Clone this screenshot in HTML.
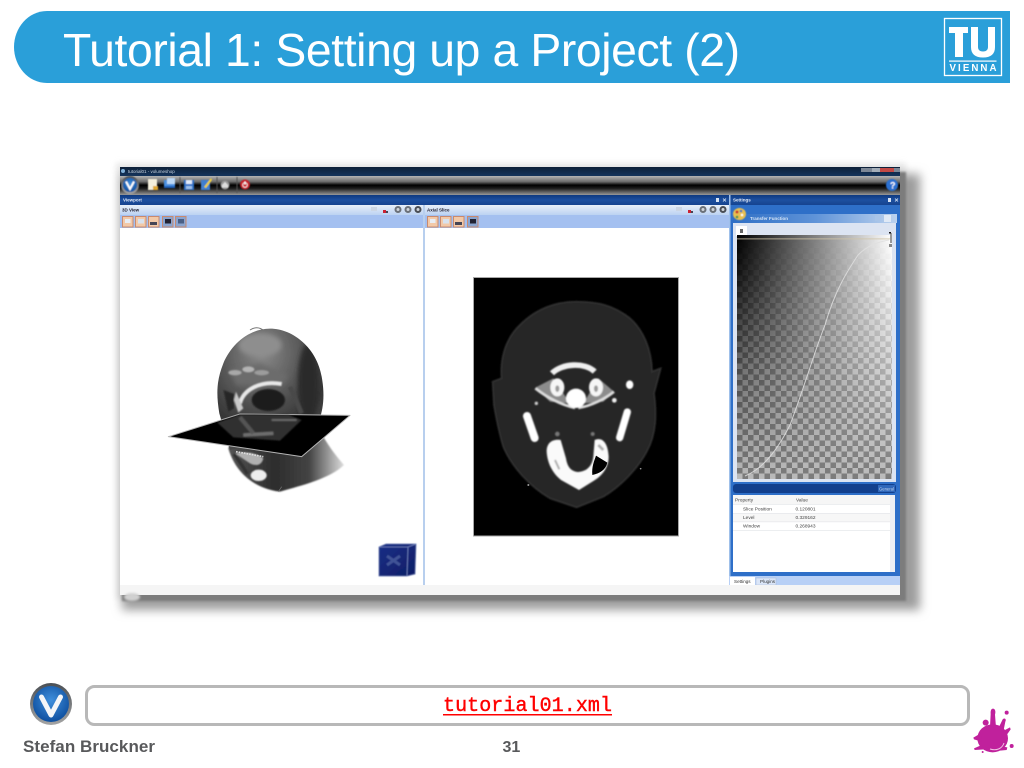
<!DOCTYPE html>
<html><head><meta charset="utf-8"><title>Tutorial 1: Setting up a Project (2)</title>
<style>html,body{margin:0;padding:0;background:#fff;width:1024px;height:768px;overflow:hidden}svg{display:block}</style>
</head><body>
<svg xmlns="http://www.w3.org/2000/svg" width="1024" height="768" viewBox="0 0 1024 768">
<defs>
<filter id="b7" x="-10%" y="-10%" width="120%" height="120%"><feGaussianBlur stdDeviation="5"/></filter>
<filter id="b3" x="-10%" y="-10%" width="120%" height="120%"><feGaussianBlur stdDeviation="3"/></filter>
<filter id="b1" x="-20%" y="-20%" width="140%" height="140%"><feGaussianBlur stdDeviation="1"/></filter>
<filter id="s" x="-20%" y="-50%" width="140%" height="200%"><feGaussianBlur stdDeviation="0.35"/></filter>
<filter id="s2" x="-30%" y="-30%" width="160%" height="160%"><feGaussianBlur stdDeviation="0.5"/></filter>
<filter id="z6" x="-30%" y="-30%" width="160%" height="160%"><feGaussianBlur stdDeviation="7"/></filter>
<filter id="z3" x="-30%" y="-30%" width="160%" height="160%"><feGaussianBlur stdDeviation="2.5"/></filter>
<linearGradient id="tb" x1="0" y1="0" x2="0" y2="1"><stop offset="0" stop-color="#b4b4b4"/><stop offset=".3" stop-color="#6c6c6c"/><stop offset=".48" stop-color="#000"/><stop offset=".65" stop-color="#1c1c1c"/><stop offset="1" stop-color="#9a9a9a"/></linearGradient>
<linearGradient id="ttl" x1="0" y1="0" x2="0" y2="1"><stop offset="0" stop-color="#0d2038"/><stop offset="1" stop-color="#14345c"/></linearGradient>
<linearGradient id="ph" x1="0" y1="0" x2="0" y2="1"><stop offset="0" stop-color="#0f3a80"/><stop offset=".5" stop-color="#1d4f9f"/><stop offset="1" stop-color="#16438f"/></linearGradient>
<linearGradient id="vh" x1="0" y1="0" x2="0" y2="1"><stop offset="0" stop-color="#e8eff9"/><stop offset="1" stop-color="#bcd2f2"/></linearGradient>
<linearGradient id="tf" x1="0" y1="0" x2="1" y2="0"><stop offset="0" stop-color="#2f6fc5"/><stop offset=".5" stop-color="#5f93d8"/><stop offset="1" stop-color="#bcd2ee"/></linearGradient>
<linearGradient id="hg" x1="0" y1="0" x2="1" y2="0"><stop offset="0" stop-color="#000"/><stop offset="1" stop-color="#fff"/></linearGradient>
<linearGradient id="fade" x1="0" y1="0" x2="0" y2="1"><stop offset="0" stop-color="#fff"/><stop offset=".15" stop-color="#ddd"/><stop offset=".55" stop-color="#666"/><stop offset="1" stop-color="#000"/></linearGradient>
<mask id="fm"><rect x="737" y="237" width="155" height="242" fill="url(#fade)"/></mask>
<pattern id="chk" x="737" y="237" width="11" height="11" patternUnits="userSpaceOnUse"><rect width="11" height="11" fill="#bbb"/><rect width="5.5" height="5.5" fill="#7c7c7c"/><rect x="5.5" y="5.5" width="5.5" height="5.5" fill="#7c7c7c"/></pattern>
<radialGradient id="blue" cx=".5" cy=".4" r=".6"><stop offset="0" stop-color="#3f8fdc"/><stop offset="1" stop-color="#0e4f9f"/></radialGradient>
<linearGradient id="ring" x1="0" y1="0" x2="0" y2="1"><stop offset="0" stop-color="#4a4f54"/><stop offset="1" stop-color="#a5a5a5"/></linearGradient>
<radialGradient id="skull" cx=".42" cy=".2" r=".85"><stop offset="0" stop-color="#8a8a8a"/><stop offset=".4" stop-color="#5c5c5c"/><stop offset=".75" stop-color="#363636"/><stop offset="1" stop-color="#4a4a4a"/></radialGradient>
<linearGradient id="neck" x1="0" y1="0" x2="1" y2="0"><stop offset="0" stop-color="#555"/><stop offset=".4" stop-color="#2c2c2c"/><stop offset=".7" stop-color="#444"/><stop offset="1" stop-color="#ddd"/></linearGradient>
<linearGradient id="cube" x1="0" y1="0" x2="1" y2="1"><stop offset="0" stop-color="#1a2f86"/><stop offset="1" stop-color="#0e1d66"/></linearGradient>
<clipPath id="hc"><path d="M330 26C400 26 470 85 485 170C495 225 490 265 478 300L420 350L300 370L210 390L195 340L178 280C168 220 170 180 190 130C215 70 270 26 330 26Z"/></clipPath>
</defs>

<!-- title bar -->
<path d="M47 11H1010V83H47C28 83 14 66 14 47C14 28 28 11 47 11Z" fill="#2a9fd9"/>
<text x="63" y="66" font-family="'Liberation Sans',sans-serif" font-size="46.300" fill="#fff" textLength="677" lengthAdjust="spacing">Tutorial 1: Setting up a Project (2)</text>

<!-- TU logo -->
<rect x="944.5" y="18.5" width="57" height="57" fill="none" stroke="#fff" stroke-width="1.3"/>
<path d="M949 27H968V33H963V57H955V33H949Z" fill="#fff"/>
<path d="M971 27H978V47C978 50 980 51.500 983 51.500C986 51.500 988 50 988 47V27H995V47C995 54 991 57.500 983 57.500C975 57.500 971 54 971 47Z" fill="#fff"/>
<rect x="949" y="60.500" width="47.500" height="1.200" fill="#fff"/>
<text x="949.500" y="71" font-family="'Liberation Sans',sans-serif" font-size="9.700" font-weight="700" fill="#fff" textLength="47" lengthAdjust="spacing">VIENNA</text>

<!-- drop shadow -->
<rect x="116" y="163" width="790" height="436" fill="#e8e8e8" filter="url(#b3)"/>
<rect x="122" y="174" width="798" height="436" fill="#9c9c9c" filter="url(#b7)"/>
<rect x="122" y="172" width="784" height="429" fill="#7c7c7c" filter="url(#b1)"/>
<rect x="120" y="167" width="780" height="428" fill="#f4f4f4"/>

<!-- window title + toolbar -->
<rect x="120" y="167" width="780" height="9" fill="url(#ttl)"/>
<circle cx="123" cy="171" r="2" fill="#7fb0d8"/>
<text x="128" y="173" font-family="'Liberation Sans',sans-serif" font-size="4.500" fill="#c8d4e2" filter="url(#s)">tutorial01 - volumeshop</text>
<g filter="url(#s)">
<rect x="861" y="168" width="11" height="4" fill="#7b8796"/><rect x="872" y="168" width="8" height="4" fill="#a3adb8"/><rect x="880" y="168" width="14" height="4" fill="#c24a44"/><rect x="894" y="168" width="6" height="4" fill="#7b8796"/>
</g>
<rect x="120" y="176" width="780" height="19" fill="url(#tb)"/>
<g filter="url(#s2)">
<circle cx="130" cy="185" r="9" fill="url(#ring)"/><circle cx="130" cy="185" r="7" fill="url(#blue)"/><path d="M126 181.500L130 189L134 181.500" fill="none" stroke="#fff" stroke-width="2"/>
<rect x="148" y="179" width="9" height="11" fill="#f4efdc"/><rect x="153" y="186" width="5" height="4" fill="#e0a830"/>
<rect x="164" y="180" width="11" height="7" fill="#4a90e0"/><rect x="167" y="178" width="8" height="6" fill="#bcd8f6"/><rect x="164" y="186" width="11" height="2" fill="#1f5fb8"/>
<rect x="179.500" y="177" width="1" height="16" fill="#555"/>
<rect x="184" y="180" width="10" height="10" fill="#2e72c8"/><rect x="186" y="180" width="6" height="4" fill="#dfeafa"/><rect x="186" y="186" width="6" height="3" fill="#9dbfe8"/>
<rect x="201" y="180" width="9" height="10" fill="#3f7fd0"/><path d="M204 187L211 178L212 180L206 188Z" fill="#f0d040"/>
<rect x="216.500" y="177" width="1" height="16" fill="#555"/>
<circle cx="225" cy="185" r="4.500" fill="#9a9a9a"/><path d="M222 185L225 182L228 185V187.500H222Z" fill="#ddd"/>
<rect x="236.500" y="177" width="1" height="16" fill="#555"/>
<circle cx="245" cy="184.500" r="5" fill="#c8202a"/><path d="M245 181.500V184.500" stroke="#fff" stroke-width="1.200"/><circle cx="245" cy="185" r="2.300" fill="none" stroke="#fff" stroke-width=".8"/>
<circle cx="892" cy="185" r="6" fill="#2a6fd0"/><text x="890" y="188.500" font-family="'Liberation Sans',sans-serif" font-size="9" font-weight="700" fill="#fff">?</text>
</g>

<!-- panel headers -->
<rect x="120" y="195" width="610" height="10" fill="url(#ph)"/>
<text x="123" y="201.500" font-family="'Liberation Sans',sans-serif" font-size="4.500" font-weight="700" fill="#e0e8f6" filter="url(#s)">Viewport</text>
<rect x="729" y="195" width="171" height="10" fill="url(#ph)"/>
<rect x="729" y="195" width="1.500" height="10" fill="#9fc0ea"/>
<text x="733" y="201.500" font-family="'Liberation Sans',sans-serif" font-size="4.500" font-weight="700" fill="#e0e8f6" filter="url(#s)">Settings</text>
<g fill="#d8e4f4" filter="url(#s)">
<rect x="716" y="198" width="3" height="4"/><path d="M723 198.500L726 201.500M726 198.500L723 201.500" stroke="#d8e4f4" stroke-width=".8"/>
<rect x="888" y="198" width="3" height="4"/><path d="M895 198.500L898 201.500M898 198.500L895 201.500" stroke="#d8e4f4" stroke-width=".8"/>
</g>

<!-- view sub headers -->
<rect x="120" y="205" width="304" height="10" fill="url(#vh)"/>
<rect x="425" y="205" width="304" height="10" fill="url(#vh)"/>
<rect x="120" y="215" width="304" height="13" fill="#a4c0f0"/>
<rect x="425" y="215" width="304" height="13" fill="#a4c0f0"/>
<rect x="120" y="228" width="304" height="357" fill="#fff"/>
<rect x="425" y="228" width="304" height="357" fill="#fff"/>
<rect x="423" y="205" width="2" height="380" fill="#b8cfee"/>
<text x="122" y="211.500" font-family="'Liberation Sans',sans-serif" font-size="4.500" font-weight="700" fill="#223" filter="url(#s)">3D View</text>
<text x="427" y="211.500" font-family="'Liberation Sans',sans-serif" font-size="4.500" font-weight="700" fill="#223" filter="url(#s)">Axial Slice</text>

<g filter="url(#s)">
<g>
<rect x="371" y="207" width="6" height="4" fill="#ccd6e4"/><rect x="383" y="210" width="3" height="3" fill="#cc2230"/><rect x="386" y="211" width="2" height="2" fill="#445"/>
<circle cx="398" cy="209.500" r="3.500" fill="#6b7078"/><circle cx="398" cy="209.500" r="1.500" fill="#cfd4da"/>
<circle cx="408" cy="209.500" r="3.500" fill="#6b7078"/><circle cx="408" cy="209.500" r="1.500" fill="#cfd4da"/>
<circle cx="418" cy="209.500" r="3.500" fill="#4a4e55"/><circle cx="418" cy="209.500" r="1.500" fill="#cfd4da"/>
</g>
<g transform="translate(305 0)">
<rect x="371" y="207" width="6" height="4" fill="#ccd6e4"/><rect x="383" y="210" width="3" height="3" fill="#cc2230"/><rect x="386" y="211" width="2" height="2" fill="#445"/>
<circle cx="398" cy="209.500" r="3.500" fill="#6b7078"/><circle cx="398" cy="209.500" r="1.500" fill="#cfd4da"/>
<circle cx="408" cy="209.500" r="3.500" fill="#6b7078"/><circle cx="408" cy="209.500" r="1.500" fill="#cfd4da"/>
<circle cx="418" cy="209.500" r="3.500" fill="#4a4e55"/><circle cx="418" cy="209.500" r="1.500" fill="#cfd4da"/>
</g>
<g stroke="#c98a6e" stroke-width="1">
<rect x="122.500" y="216.500" width="10.500" height="10.500" fill="#f2c9a8"/><rect x="135.500" y="216.500" width="10.500" height="10.500" fill="#f2c9a8"/><rect x="148.500" y="216.500" width="10.500" height="10.500" fill="#f2c9a8"/>
<rect x="162.500" y="216.500" width="10.500" height="10.500" fill="#8aa4cf"/><rect x="175.500" y="216.500" width="10.500" height="10.500" fill="#8aa4cf"/>
<rect x="427.500" y="216.500" width="10.500" height="10.500" fill="#f2c9a8"/><rect x="440.500" y="216.500" width="10.500" height="10.500" fill="#f2c9a8"/><rect x="453.500" y="216.500" width="10.500" height="10.500" fill="#f2c9a8"/>
<rect x="467.500" y="216.500" width="10.500" height="10.500" fill="#8aa4cf"/>
</g>
<rect x="125" y="219" width="5.500" height="4" fill="#e8edf4"/><rect x="138" y="219" width="6" height="4.500" fill="#d8e2ee"/><rect x="150" y="222" width="7" height="3" fill="#445"/>
<rect x="165" y="219" width="6" height="4.500" fill="#223"/><rect x="178" y="219" width="6" height="4.500" fill="#4a5f86"/>
<rect x="430" y="219" width="5.500" height="4" fill="#e8edf4"/><rect x="443" y="219" width="6" height="4.500" fill="#d8e2ee"/><rect x="455" y="222" width="7" height="3" fill="#445"/><rect x="470" y="219" width="6" height="4.500" fill="#223"/>
</g>

<!-- 3D skull -->
<g transform="translate(160 320) scale(.33333)">
<path d="M270 30C285 20 300 22 312 32" fill="none" stroke="#777" stroke-width="3"/>
<path d="M205 385C225 455 280 505 360 515C430 495 510 475 552 435C530 410 510 385 490 350L420 330L220 340Z" fill="url(#neck)" filter="url(#z3)"/>
<path d="M330 26C400 26 470 85 485 170C495 225 490 265 478 300L420 350L300 370L210 390L195 340L178 280C168 220 170 180 190 130C215 70 270 26 330 26Z" fill="url(#skull)" filter="url(#s2)"/>
<g clip-path="url(#hc)">
<g filter="url(#z6)">
<ellipse cx="300" cy="75" rx="65" ry="35" fill="#8e8e8e"/>
<ellipse cx="445" cy="190" rx="32" ry="120" fill="#2c2c2c"/>
<path d="M210 150L300 130L385 165L370 190L230 195Z" fill="#6c6c6c"/>
</g>
<g filter="url(#z3)">
<ellipse cx="225" cy="158" rx="20" ry="8" fill="#a8a8a8"/><ellipse cx="265" cy="148" rx="18" ry="9" fill="#b4b4b4"/><ellipse cx="305" cy="158" rx="22" ry="8" fill="#9c9c9c"/>
<path d="M240 250C250 210 300 180 365 192" fill="none" stroke="#e8e8e8" stroke-width="12"/>
<path d="M390 200L425 280" stroke="#4a4a4a" stroke-width="14"/>
<path d="M190 210L222 222L222 265L205 275Z" fill="#262626"/>
<path d="M228 215L250 265L235 278L222 240Z" fill="#c8c8c8"/>
</g>
<ellipse cx="325" cy="240" rx="50" ry="33" fill="#1b1b1b" filter="url(#z3)"/>
</g>
<polygon points="25,350 240,282 570,286 425,410" fill="#000" stroke="#b5b5b5" stroke-width="3" stroke-linejoin="round"/>
<g filter="url(#z3)" opacity=".8">
<path d="M172 308L240 284L385 284L425 300L360 362L220 352Z" fill="#3c3c3c"/>
<path d="M250 345L340 340" stroke="#8a8a8a" stroke-width="10"/>
<path d="M240 292L280 340" stroke="#6a6a6a" stroke-width="12"/>
<path d="M335 300L410 300" stroke="#888" stroke-width="5"/>
</g>
<g filter="url(#z3)">
<path d="M225 400C250 395 285 395 310 415C305 435 290 440 270 430Z" fill="#b0b0b0"/>
<ellipse cx="296" cy="466" rx="24" ry="17" fill="#eee"/>
<path d="M262 462C250 440 235 420 222 402" stroke="#333" stroke-width="10" fill="none"/>
</g>
<path d="M228 395L310 410" stroke="#ddd" stroke-width="5" stroke-dasharray="5 3" filter="url(#s2)"/>
<path d="M355 515L365 500" stroke="#777" stroke-width="2"/>
</g>

<!-- axis cube -->
<g filter="url(#s2)">
<path d="M379 547L386 544L416 544L415 574L407 576L379 576Z" fill="url(#cube)" stroke="#5a6ca8" stroke-width=".8"/>
<path d="M379 547L408 547L416 544M408 547L407 576" fill="none" stroke="#7587c0" stroke-width=".8"/>
<path d="M387 556L400 565M400 556L387 565" stroke="#3f5296" stroke-width="3"/>
</g>

<!-- CT slice -->
<rect x="473.500" y="277.500" width="205" height="258.500" fill="#000" stroke="#a8a8a8" stroke-width="1"/>
<g transform="translate(470 270) scale(.33333)">
<path d="M320 95C380 95 430 105 480 145C520 180 545 240 546 305L572 295L552 370C560 430 560 490 530 545C500 600 450 650 400 680L320 712L240 685C180 650 125 590 100 530C85 480 78 440 72 405L68 335L95 325C90 270 105 215 140 175C190 120 250 95 320 95Z" fill="#262626" stroke="#333" stroke-width="5" filter="url(#z3)"/>
<g filter="url(#z3)">
<path d="M246 310C275 280 345 276 374 305" fill="none" stroke="#f0f0f0" stroke-width="17"/>
<path d="M196 353L250 325L300 400L240 395Z" fill="#8c8c8c"/>
<path d="M432 365L385 325L340 400L400 395Z" fill="#8c8c8c"/>
<path d="M196 355C225 378 265 402 315 414" fill="none" stroke="#ddd" stroke-width="8"/>
<path d="M432 365C405 387 365 407 325 414" fill="none" stroke="#ddd" stroke-width="8"/>
<ellipse cx="262" cy="352" rx="21" ry="27" fill="#f6f6f6"/><ellipse cx="262" cy="356" rx="6" ry="10" fill="#999"/>
<ellipse cx="378" cy="352" rx="21" ry="27" fill="#f6f6f6"/><ellipse cx="378" cy="356" rx="6" ry="10" fill="#999"/>
<ellipse cx="318" cy="385" rx="30" ry="29" fill="#fff"/>
<ellipse cx="479" cy="344" rx="11" ry="13" fill="#fff"/>
<circle cx="433" cy="391" r="7" fill="#f0f0f0"/>
<circle cx="199" cy="400" r="5" fill="#ccc"/>
<path d="M171 438L194 504" stroke="#fff" stroke-width="24" stroke-linecap="round"/>
<path d="M472 426L449 503" stroke="#fff" stroke-width="22" stroke-linecap="round"/>
<circle cx="262" cy="492" r="7" fill="#777"/><circle cx="368" cy="492" r="6" fill="#777"/>
<path d="M230 545C230 520 245 506 272 510L288 565C292 590 302 604 325 606C350 604 366 590 370 560L374 510C398 500 414 520 416 560C416 592 397 617 372 632L327 660L273 630C248 610 232 580 230 545Z" fill="#fafafa"/>
<path d="M255 570L268 598" stroke="#aaa" stroke-width="6"/>
<path d="M385 525L400 540" stroke="#aaa" stroke-width="8"/>
</g>
<path d="M378 557L412 578C407 600 390 610 367 615C365 590 372 575 378 557Z" fill="#000"/>
<circle cx="175" cy="645" r="3" fill="#999"/><circle cx="512" cy="596" r="2.500" fill="#999"/>
</g>

<!-- Settings panel -->
<rect x="729" y="205" width="171" height="371" fill="#2e6fc8"/>
<rect x="729" y="195" width="1.500" height="390" fill="#9fc0ea"/>
<rect x="733" y="214" width="164" height="9" fill="url(#tf)"/>
<text x="750" y="220" font-family="'Liberation Sans',sans-serif" font-size="4.500" font-weight="700" fill="#d8e6f6" filter="url(#s)">Transfer Function</text>
<rect x="733" y="223" width="163" height="259" fill="#dce4f2"/>
<rect x="736" y="226" width="11" height="10" fill="#fff"/>
<rect x="740" y="229" width="3" height="4" fill="#666"/>
<rect x="875" y="216" width="5" height="5" fill="#a8c4e8" /><rect x="884" y="215" width="7" height="7" fill="#dfe9f6"/>
<g filter="url(#s2)">
<ellipse cx="739.500" cy="214" rx="6.500" ry="6" fill="#e8c050"/><circle cx="737" cy="212" r="1.500" fill="#c83030"/><circle cx="741" cy="211" r="1.300" fill="#3a70c0"/><circle cx="737" cy="217" r="1.300" fill="#3a9050"/><circle cx="742" cy="215" r="1.200" fill="#fff"/>
</g>
<rect x="737" y="235" width="155" height="4" fill="url(#hg)"/>
<rect x="737" y="237" width="155" height="242" fill="url(#chk)" filter="url(#s)"/>
<rect x="737" y="237" width="155" height="242" fill="url(#hg)" mask="url(#fm)"/>
<rect x="737" y="238.500" width="155" height=".8" fill="#cfc4a8"/>
<path d="M745 476C765 468 780 445 790 425C805 385 815 350 825 325C835 290 848 270 858 255C868 245 878 242 889 240" fill="none" stroke="#e0e0e0" stroke-width="1" opacity=".85" filter="url(#s)"/>
<rect x="890" y="233" width="2" height="10" fill="#999"/><rect x="889" y="244" width="3" height="3" fill="#888"/><rect x="889" y="232" width="2" height="1.500" fill="#111"/>
<rect x="733" y="484" width="163" height="9" rx="3" fill="#123f8c"/>
<rect x="878" y="485" width="17" height="7" fill="#2f67ba"/>
<text x="879" y="490.500" font-family="'Liberation Sans',sans-serif" font-size="4.200" fill="#c4d6f0" filter="url(#s)">General</text>
<rect x="733" y="495" width="162" height="77" fill="#fff"/>
<rect x="733" y="495" width="158" height="9" fill="#f6f6f6"/>
<rect x="890" y="495" width="5" height="77" fill="#eef0f4"/>
<rect x="733" y="513.500" width="157" height="8" fill="#f7f7f7"/>
<g fill="#e4e6ea"><rect x="733" y="504" width="157" height=".7"/><rect x="733" y="513" width="157" height=".7"/><rect x="733" y="521.500" width="157" height=".7"/><rect x="733" y="530" width="157" height=".7"/></g>
<g font-family="'Liberation Sans',sans-serif" font-size="4.800" fill="#444" filter="url(#s)">
<text x="735" y="501.500">Property</text><text x="796" y="501.500">Value</text>
<text x="743" y="510.500">Slice Position</text><text x="795.500" y="510.500">0.120801</text>
<text x="743" y="519">Level</text><text x="795.500" y="519">0.329162</text>
<text x="743" y="527.500">Window</text><text x="795.500" y="527.500">0.268943</text>
</g>
<rect x="729" y="576" width="171" height="9" fill="#b8d0f6"/>
<rect x="730" y="577" width="25" height="8" fill="#fff"/>
<rect x="756" y="578" width="20" height="7" fill="#dbe6f8" stroke="#a8b8d4" stroke-width=".5"/>
<g font-family="'Liberation Sans',sans-serif" font-size="4.600" fill="#333" filter="url(#s)"><text x="734" y="582.800">Settings</text><text x="760" y="582.800">Plugins</text></g>
<rect x="120" y="585" width="780" height="10" fill="#f5f5f5"/>
<ellipse cx="132" cy="597" rx="8" ry="4" fill="#d0d0d0" filter="url(#b1)"/>

<!-- footer -->
<circle cx="51" cy="704" r="21" fill="url(#ring)"/>
<circle cx="51" cy="704" r="18" fill="url(#blue)"/>
<path d="M41.500 697L51 715L60.500 697" fill="none" stroke="#f4f6f8" stroke-width="5" stroke-linejoin="round" stroke-linecap="round"/>
<rect x="86.500" y="686.500" width="882" height="38" rx="8" fill="#fff" stroke="#b8b8b8" stroke-width="3"/>
<text x="443" y="711" font-family="'Liberation Mono',monospace" font-size="20" fill="#f00" stroke="#f00" stroke-width=".4" textLength="169">tutorial01.xml</text>
<rect x="443" y="714" width="169" height="1.500" fill="#f00"/>
<text x="23" y="752" font-family="'Liberation Sans',sans-serif" font-size="17" font-weight="700" fill="#58595b" textLength="132">Stefan Bruckner</text>
<text x="502.500" y="752" font-family="'Liberation Sans',sans-serif" font-size="16" font-weight="700" fill="#58595b">31</text>

<!-- splat -->
<g fill="#c0219c" transform="translate(950 690) scale(.33333)">
<ellipse cx="128" cy="145" rx="46" ry="42"/>
<path d="M120 110L122 72C121 62 124 56 129 56C135 56 138 64 135 74L138 112Z"/>
<path d="M145 115L158 88C164 82 170 88 166 95L160 125Z"/>
<path d="M92 130L70 143L72 148L95 155Z"/>
<path d="M95 165L72 175L74 180L105 178Z"/>
<path d="M160 170L172 172L170 180L150 182Z"/>
<path d="M165 120L180 112L182 118L170 135Z"/>
<circle cx="170" cy="68" r="6"/><circle cx="185" cy="168" r="6"/><circle cx="107" cy="98" r="9"/><circle cx="98" cy="186" r="3"/>
</g>
<path d="M990 749C996 751 1002 749 1004 743" fill="none" stroke="#f0c0e4" stroke-width="1"/>
</svg>
</body></html>
